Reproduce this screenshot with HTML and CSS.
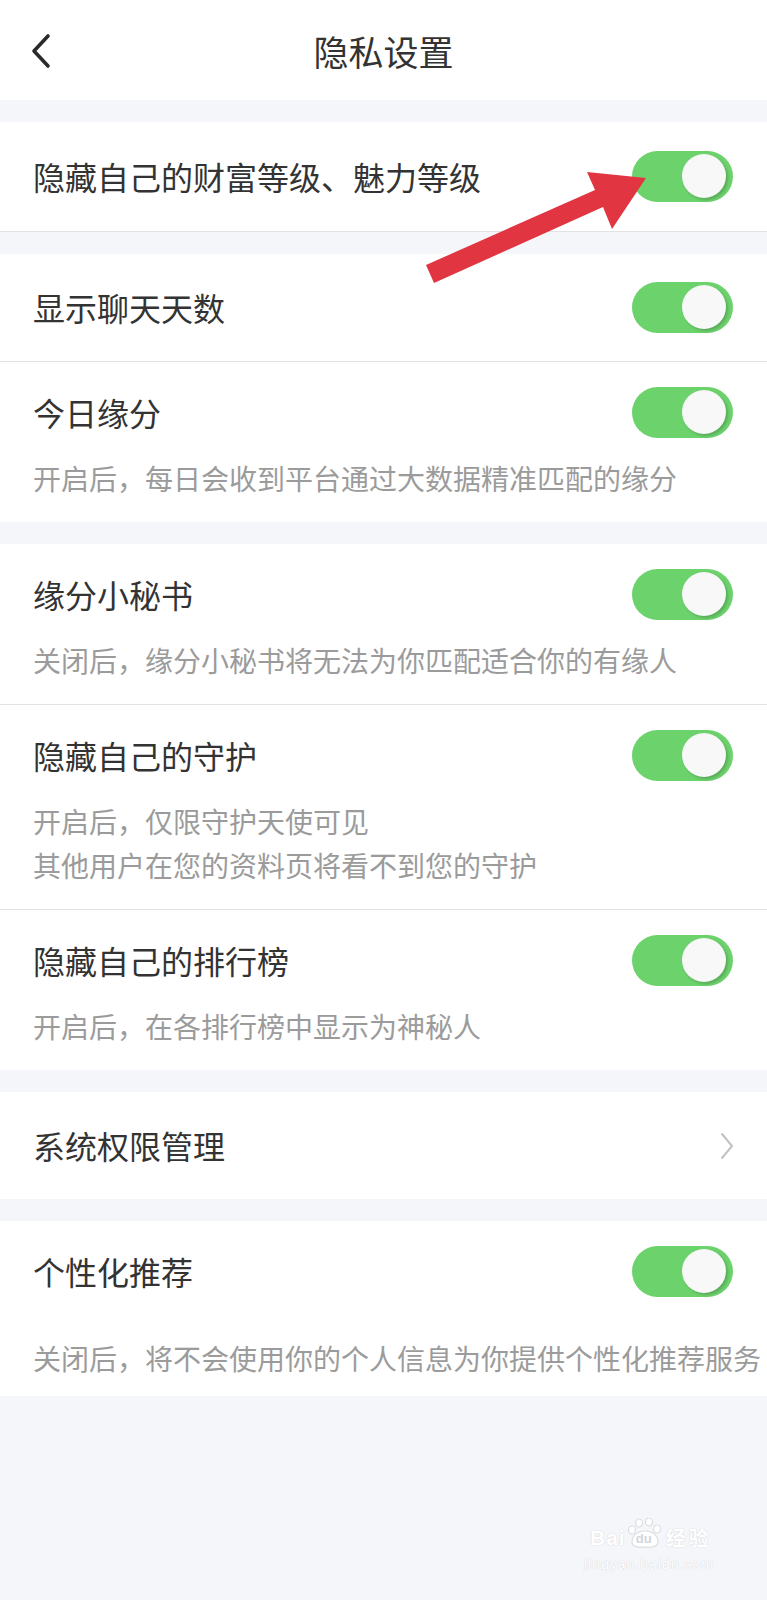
FILE: index.html
```html
<!DOCTYPE html>
<html lang="zh-CN">
<head>
  <meta charset="UTF-8" />
  <meta name="viewport" content="width=device-width, initial-scale=1.0"/>
  <title>隐私设置</title>
  <link rel="stylesheet" href="styles.css">
</head>
<body>
  <div class="page">

    <!-- Top bar -->
    <header class="topbar">
      <svg class="back" viewBox="0 0 24 36" width="24" height="36">
        <path d="M19 3 L5 18 L19 33" fill="none" stroke="#2a2a2a" stroke-width="3.6" stroke-linecap="round" stroke-linejoin="round"/>
      </svg>
      <h1>隐私设置</h1>
      <span></span>
    </header>

    <section class="group group-first">
      <div class="item">
        <div class="item-head">
          <span class="item-title">隐藏自己的财富等级、魅力等级</span>
          <span class="switch"></span>
        </div>
      </div>
    </section>

    <section class="group">
      <div class="item">
        <div class="item-head">
          <span class="item-title">显示聊天天数</span>
          <span class="switch"></span>
        </div>
      </div>
      <div class="item has-desc">
        <div class="item-head">
          <span class="item-title">今日缘分</span>
          <span class="switch"></span>
        </div>
        <p class="item-desc">开启后，每日会收到平台通过大数据精准匹配的缘分</p>
      </div>
    </section>

    <section class="group">
      <div class="item has-desc">
        <div class="item-head">
          <span class="item-title">缘分小秘书</span>
          <span class="switch"></span>
        </div>
        <p class="item-desc">关闭后，缘分小秘书将无法为你匹配适合你的有缘人</p>
      </div>
      <div class="item has-desc">
        <div class="item-head">
          <span class="item-title">隐藏自己的守护</span>
          <span class="switch"></span>
        </div>
        <p class="item-desc">开启后，仅限守护天使可见<br>其他用户在您的资料页将看不到您的守护</p>
      </div>
      <div class="item has-desc">
        <div class="item-head">
          <span class="item-title">隐藏自己的排行榜</span>
          <span class="switch"></span>
        </div>
        <p class="item-desc">开启后，在各排行榜中显示为神秘人</p>
      </div>
    </section>

    <section class="group">
      <div class="item">
        <div class="item-head">
          <span class="item-title">系统权限管理</span>
          <svg class="chevron" viewBox="0 0 16 28" width="16" height="28">
            <path d="M3 2 L13 14 L3 26" fill="none" stroke="#c2c2c2" stroke-width="2" stroke-linecap="round" stroke-linejoin="round"/>
          </svg>
        </div>
      </div>
    </section>

    <section class="group">
      <div class="item has-desc loose">
        <div class="item-head">
          <span class="item-title">个性化推荐</span>
          <span class="switch"></span>
        </div>
        <p class="item-desc">关闭后，将不会使用你的个人信息为你提供个性化推荐服务</p>
      </div>
    </section>

    <!-- red annotation arrow drawn over the screenshot -->
    <svg class="arrow" viewBox="0 0 767 400" width="767" height="400">
      <polygon points="426,265 595,190 587,172 646,178 612,229 603,207 434,283" fill="#e13541"/>
    </svg>

    <div class="watermark">
      <div class="wm-logo">
        <span class="wm-bai">Bai</span>
        <span class="wm-paw">
          <svg viewBox="0 0 36 30" width="36" height="30">
            <g fill="#fff" stroke="#dcdde2" stroke-width="1.2">
              <ellipse cx="12" cy="5" rx="3.5" ry="4"/>
              <ellipse cx="22" cy="4" rx="3.5" ry="4"/>
              <ellipse cx="30" cy="11" rx="3.5" ry="4"/>
              <ellipse cx="5" cy="12" rx="3.5" ry="4"/>
              <path d="M5 24 C5 17 11 13 18 13 C25 13 31 17 31 24 C31 29 25 29.5 18 29 C11 29.5 5 29 5 24 Z"/>
            </g>
          </svg>
          <span class="wm-du">du</span>
        </span>
        <span class="wm-cn">经验</span>
      </div>
      <div class="wm-url">jingyan.baidu.com</div>
    </div>

  </div>
</body>
</html>
```

FILE: styles.css
```css
body {
  margin: 0;
  background-color: #f5f6f9;
  font-family: "Noto Sans CJK SC", "Noto Sans", sans-serif;
  color: #333;
}

.page {
  position: relative;
  width: 767px;
  min-height: 1600px;
}

.topbar {
  height: 100px;
  background-color: #fff;
  display: grid;
  grid-template-columns: 1fr auto 1fr;
  align-items: center;
}

.back {
  margin-left: 29px;
  margin-top: 2px;
}

.topbar h1 {
  margin: 0;
  font-size: 35px;
  font-weight: normal;
  color: #333;
  line-height: 1;
}

.group {
  background-color: #fff;
  margin-top: 22px;
}

.group-first {
  border-bottom: 1px solid #e2e2e2;
}

.group-first .item-head {
  height: 109px;
}

.item {
  padding: 0 34px 0 33px;
}

.item + .item {
  border-top: 1px solid #e2e2e2;
}

.item-head {
  height: 107px;
  display: flex;
  align-items: center;
  justify-content: space-between;
}

.item-title {
  font-size: 32px;
  line-height: 1.2;
  color: #333;
}

.has-desc {
  padding-bottom: 22px;
}

.has-desc .item-head {
  height: 100px;
}

.item-desc {
  margin: -6px 0 0;
  font-size: 28px;
  line-height: 44px;
  color: #9b9b9b;
  white-space: nowrap;
}

.loose {
  padding-bottom: 16px;
}

.loose .item-desc {
  margin-top: 15px;
}

.switch {
  position: relative;
  flex: none;
  width: 101px;
  height: 51px;
  border-radius: 26px;
  background-color: #6cd26c;
}

.switch::after {
  content: "";
  position: absolute;
  top: 3px;
  right: 7px;
  width: 44px;
  height: 44px;
  border-radius: 50%;
  background-color: #f8f8f8;
  box-shadow: 2px 2px 3px rgba(0,0,0,0.18);
}

.chevron {
  margin-right: -2px;
}

.arrow {
  position: absolute;
  left: 0;
  top: 0;
  pointer-events: none;
}

.watermark {
  position: absolute;
  left: 584px;
  top: 1518px;
  color: #fff;
  font-family: "Liberation Sans", sans-serif;
  text-shadow: 0 0 1px #d4d5db, 0 0 1px #d4d5db;
}

.wm-logo {
  display: flex;
  align-items: flex-end;
}

.wm-bai {
  font-size: 21px;
  font-weight: bold;
  letter-spacing: 1px;
  line-height: 1;
  margin-left: 6px;
}

.wm-paw {
  position: relative;
  width: 36px;
  height: 30px;
  margin: 0 3px 0 1px;
}

.wm-du {
  position: absolute;
  left: 9px;
  top: 14px;
  font-size: 13px;
  font-weight: bold;
  line-height: 1;
  text-shadow: none;
  color: #d4d5db;
}

.wm-cn {
  font-family: "Noto Sans CJK SC", sans-serif;
  font-size: 20px;
  font-weight: bold;
  letter-spacing: 3px;
  line-height: 1;
}

.wm-url {
  margin-top: 8px;
  font-size: 14px;
  letter-spacing: 1px;
}
```
